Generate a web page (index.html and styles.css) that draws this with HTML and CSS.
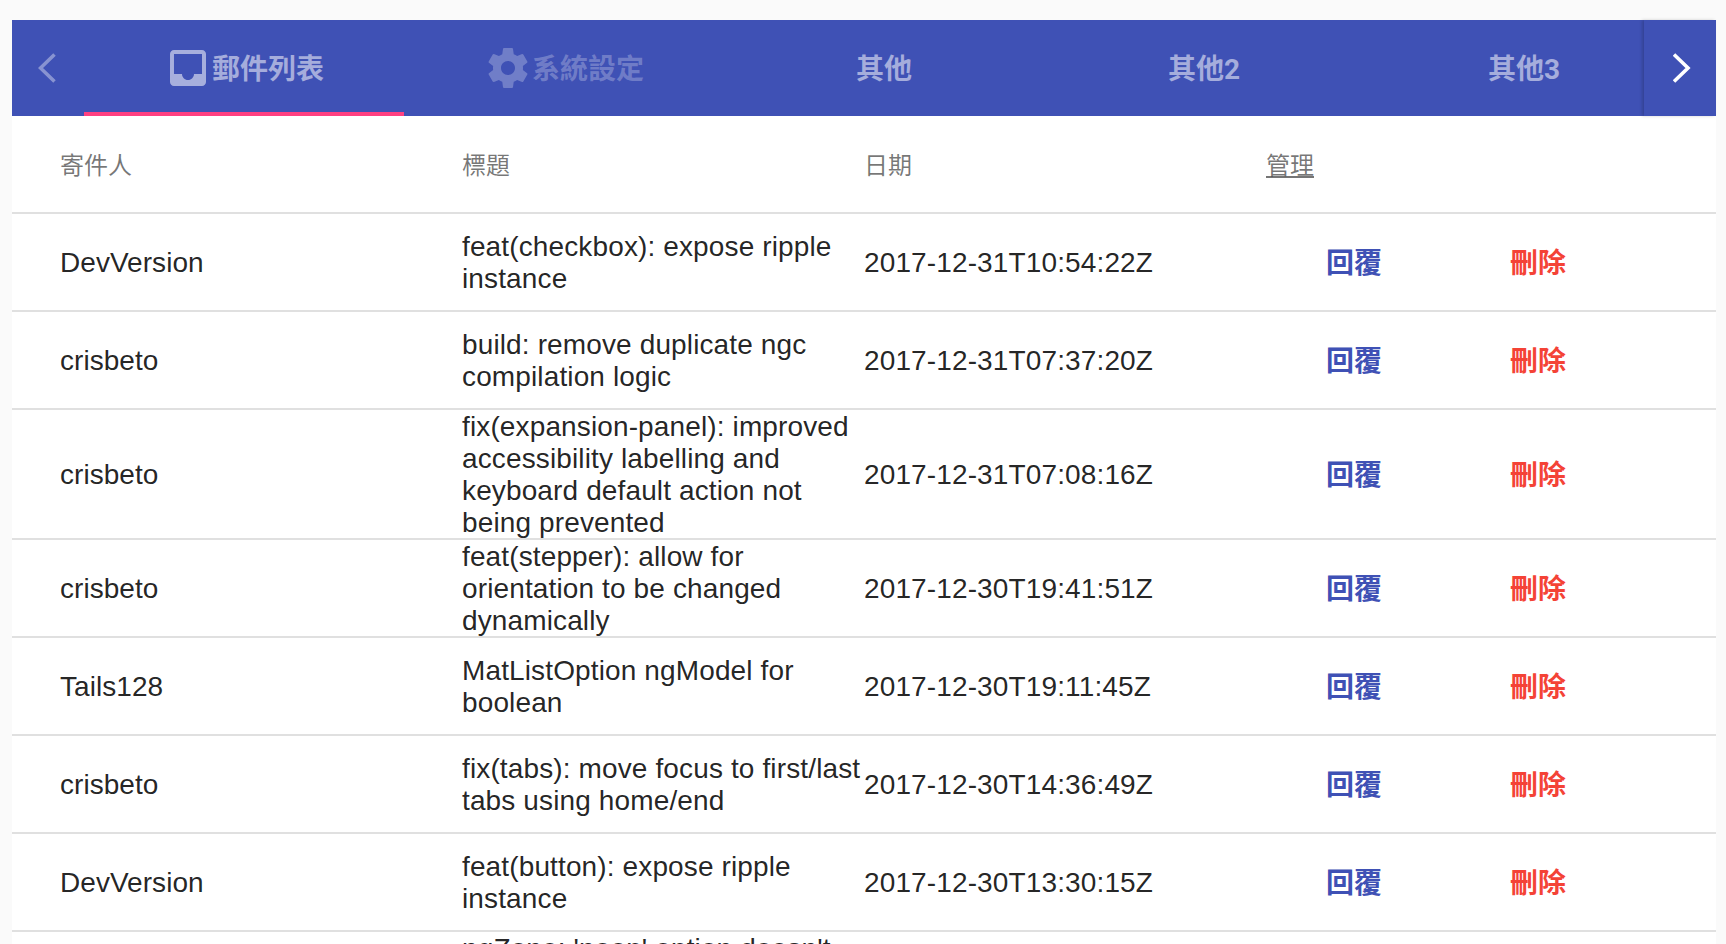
FILE: index.html
```html
<!DOCTYPE html>
<html lang="zh-Hant">
<head>
<meta charset="utf-8">
<title>郵件列表</title>
<link rel="stylesheet" href="styles.css">
</head>
<body>
<main class="card">
  <nav class="tabbar">
    <div class="pager pager-prev">
      <svg class="chevron" width="18" height="30" viewBox="0 0 18 30"><polyline points="16.5,1.5 2.5,15 16.5,28.5"/></svg>
    </div>
    <div class="tabs">
      <div class="tab tab-active">
        <svg class="tab-icon" viewBox="0 0 24 24"><path d="M19 3H4.99c-1.11 0-1.98.89-1.98 2L3 19c0 1.1.88 2 1.99 2H19c1.1 0 2-.9 2-2V5c0-1.11-.9-2-2-2zm0 12h-4c0 1.66-1.35 3-3 3s-3-1.34-3-3H4.99V5H19v10z"/></svg>
        <span class="tab-label">郵件列表</span>
      </div>
      <div class="tab tab-disabled">
        <svg class="tab-icon" viewBox="0 0 24 24"><path d="M19.43 12.98c.04-.32.07-.64.07-.98s-.03-.66-.07-.98l2.11-1.65c.19-.15.24-.42.12-.64l-2-3.46c-.12-.22-.39-.3-.61-.22l-2.49 1c-.52-.4-1.08-.73-1.69-.98l-.38-2.65C14.46 2.18 14.25 2 14 2h-4c-.25 0-.46.18-.49.42l-.38 2.65c-.61.25-1.17.59-1.69.98l-2.49-1c-.23-.09-.49 0-.61.22l-2 3.46c-.13.22-.07.49.12.64l2.11 1.65c-.04.32-.07.65-.07.98s.03.66.07.98l-2.11 1.65c-.19.15-.24.42-.12.64l2 3.46c.12.22.39.3.61.22l2.49-1c.52.4 1.08.73 1.69.98l.38 2.65c.03.24.24.42.49.42h4c.25 0 .46-.18.49-.42l.38-2.65c.61-.25 1.17-.59 1.69-.98l2.49 1c.23.09.49 0 .61-.22l2-3.46c.12-.22.07-.49-.12-.64l-2.11-1.65zM12 15.5c-1.93 0-3.5-1.57-3.5-3.5s1.57-3.5 3.5-3.5 3.5 1.57 3.5 3.5-1.57 3.5-3.5 3.5z"/></svg>
        <span class="tab-label">系統設定</span>
      </div>
      <div class="tab"><span class="tab-label">其他</span></div>
      <div class="tab"><span class="tab-label">其他2</span></div>
      <div class="tab"><span class="tab-label">其他3</span></div>
    </div>
    <div class="pager pager-next">
      <svg class="chevron" width="18" height="30" viewBox="0 0 18 30"><polyline points="1,1.5 15,15 1,28.5"/></svg>
    </div>
  </nav>

  <section class="table">
    <div class="row row-head">
      <div class="cell">寄件人</div>
      <div class="cell">標題</div>
      <div class="cell">日期</div>
      <div class="cell"><span class="sort">管理</span></div>
    </div>

    <div class="row">
      <div class="cell cell-name">DevVersion</div>
      <div class="cell cell-text">feat(checkbox): expose ripple instance</div>
      <div class="cell cell-text">2017-12-31T10:54:22Z</div>
      <div class="cell actions"><button class="btn btn-primary">回覆</button><button class="btn btn-warn">刪除</button></div>
    </div>
    <div class="row">
      <div class="cell cell-name">crisbeto</div>
      <div class="cell cell-text">build: remove duplicate ngc compilation logic</div>
      <div class="cell cell-text">2017-12-31T07:37:20Z</div>
      <div class="cell actions"><button class="btn btn-primary">回覆</button><button class="btn btn-warn">刪除</button></div>
    </div>
    <div class="row">
      <div class="cell cell-name">crisbeto</div>
      <div class="cell cell-text">fix(expansion-panel): improved accessibility labelling and keyboard default action not being prevented</div>
      <div class="cell cell-text">2017-12-31T07:08:16Z</div>
      <div class="cell actions"><button class="btn btn-primary">回覆</button><button class="btn btn-warn">刪除</button></div>
    </div>
    <div class="row">
      <div class="cell cell-name">crisbeto</div>
      <div class="cell cell-text">feat(stepper): allow for orientation to be changed dynamically</div>
      <div class="cell cell-text">2017-12-30T19:41:51Z</div>
      <div class="cell actions"><button class="btn btn-primary">回覆</button><button class="btn btn-warn">刪除</button></div>
    </div>
    <div class="row">
      <div class="cell cell-name">Tails128</div>
      <div class="cell cell-text">MatListOption ngModel for boolean</div>
      <div class="cell cell-text">2017-12-30T19:11:45Z</div>
      <div class="cell actions"><button class="btn btn-primary">回覆</button><button class="btn btn-warn">刪除</button></div>
    </div>
    <div class="row">
      <div class="cell cell-name">crisbeto</div>
      <div class="cell cell-text">fix(tabs): move focus to first/last tabs using home/end</div>
      <div class="cell cell-text">2017-12-30T14:36:49Z</div>
      <div class="cell actions"><button class="btn btn-primary">回覆</button><button class="btn btn-warn">刪除</button></div>
    </div>
    <div class="row">
      <div class="cell cell-name">DevVersion</div>
      <div class="cell cell-text">feat(button): expose ripple instance</div>
      <div class="cell cell-text">2017-12-30T13:30:15Z</div>
      <div class="cell actions"><button class="btn btn-primary">回覆</button><button class="btn btn-warn">刪除</button></div>
    </div>
    <div class="row">
      <div class="cell cell-name">crisbeto</div>
      <div class="cell cell-text">ngZone: 'noop' option doesn't work with the overlay container in this module</div>
      <div class="cell cell-text">2017-12-30T12:12:03Z</div>
      <div class="cell actions"><button class="btn btn-primary">回覆</button><button class="btn btn-warn">刪除</button></div>
    </div>
  </section>
</main>
</body>
</html>
```

FILE: styles.css
```css
html {
  height: 100%;
  overflow: hidden;
}

body {
  margin: 0;
  padding: 20px 10px 0 12px;
  background: #fafafa;
  font-family: "Liberation Sans", "Noto Sans CJK TC", sans-serif;
  color: rgba(0, 0, 0, 0.87);
}

.card {
  background: #fff;
}

.tabbar {
  display: flex;
  height: 96px;
  background: #3f51b5;
}

.pager {
  flex: 0 0 72px;
  display: flex;
  align-items: center;
  justify-content: center;
}

.pager-prev {
  padding-right: 2px;
  box-sizing: border-box;
}

.pager-next {
  padding-left: 3px;
  box-sizing: border-box;
  box-shadow: -2px 0 3px rgba(0, 0, 0, 0.18);
  z-index: 1;
}

.chevron {
  fill: none;
  stroke: #fff;
  stroke-width: 3.6;
}

.pager-prev .chevron {
  opacity: 0.38;
}

.tabs {
  flex: 1 1 0;
  min-width: 0;
  display: flex;
  overflow: hidden;
}

.tab {
  flex: 0 0 320px;
  display: flex;
  align-items: center;
  justify-content: center;
  font-family: Roboto, "Noto Sans CJK TC", sans-serif;
  font-size: 28px;
  font-weight: 700;
  color: rgba(255, 255, 255, 0.54);
}

.tab-label {
  padding-bottom: 2px;
}

.tab-active {
  box-shadow: inset 0 -4px 0 #ff4081;
}

.tab-disabled {
  color: rgba(255, 255, 255, 0.26);
}

.tab-icon {
  width: 48px;
  height: 48px;
  fill: currentColor;
}

.row {
  box-sizing: border-box;
  display: flex;
  align-items: center;
  min-height: 98px;
  padding: 0 48px;
  border-bottom: 2px solid #e0e0e0;
  font-size: 28px;
  line-height: 32px;
}

.row-head {
  padding-top: 4px;
  font-size: 24px;
  color: rgba(0, 0, 0, 0.54);
}

.cell {
  flex: 1 1 0;
  min-width: 0;
}

.cell-name {
  letter-spacing: 0.05px;
  transform: translateY(1px);
}

.cell-text {
  letter-spacing: 0.13px;
  transform: translateY(1px);
}

.sort {
  text-decoration: underline;
}

.actions {
  display: flex;
  gap: 8px;
}

.btn {
  flex: 0 0 176px;
  height: 72px;
  padding: 0 0 2px;
  border: 0;
  background: transparent;
  font: 700 28px "Liberation Sans", "Noto Sans CJK TC", sans-serif;
}

.btn-primary {
  color: #3f51b5;
}

.btn-warn {
  color: #f44336;
}
```
